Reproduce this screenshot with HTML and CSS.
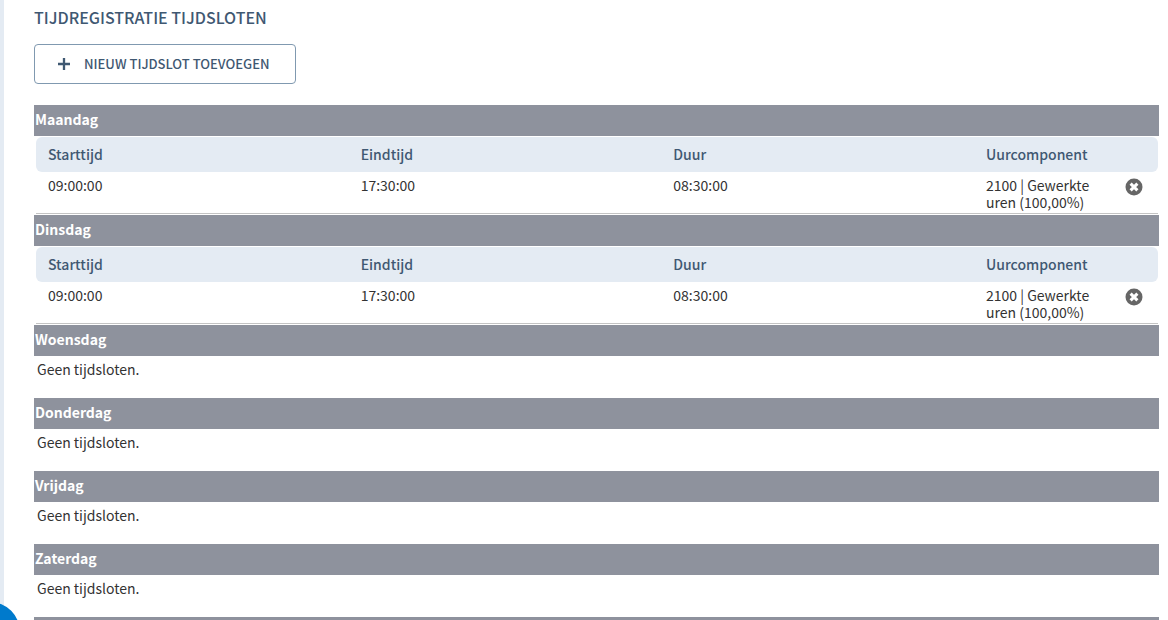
FILE: index.html
```html
<!DOCTYPE html>
<html lang="nl">
<head>
  <meta charset="UTF-8" />
  <meta name="viewport" content="width=device-width, initial-scale=1" />
  <title>Tijdregistratie tijdsloten</title>
  <link rel="stylesheet" href="styles.css">
</head>
<body>

  <main>
    <h1>TIJDREGISTRATIE TIJDSLOTEN</h1>

    <button type="button" class="add-btn">
      <svg width="14" height="14" viewBox="0 0 14 14" aria-hidden="true"><path d="M7 1v12M1 7h12" stroke="currentColor" stroke-width="2.3" fill="none" /></svg>
      <span>NIEUW TIJDSLOT TOEVOEGEN</span>
    </button>

    <section class="day">
      <h2>Maandag</h2>
      <table class="slots">
        <thead>
          <tr><th>Starttijd</th><th>Eindtijd</th><th>Duur</th><th class="component">Uurcomponent</th><th class="action"></th></tr>
        </thead>
        <tbody>
          <tr>
            <td>09:00:00</td>
            <td>17:30:00</td>
            <td>08:30:00</td>
            <td>2100 | Gewerkte uren (100,00%)</td>
            <td class="action">
              <button type="button" class="delete-btn" aria-label="Verwijderen">
                <svg width="18" height="18" viewBox="0 0 18 18" aria-hidden="true"><circle cx="9" cy="9" r="8.5" fill="#666" /><path d="M5.6 5.6l6.8 6.8M12.4 5.6l-6.8 6.8" stroke="#fff" stroke-width="3" /></svg>
              </button>
            </td>
          </tr>
        </tbody>
      </table>
    </section>

    <section class="day">
      <h2>Dinsdag</h2>
      <table class="slots">
        <thead>
          <tr><th>Starttijd</th><th>Eindtijd</th><th>Duur</th><th class="component">Uurcomponent</th><th class="action"></th></tr>
        </thead>
        <tbody>
          <tr>
            <td>09:00:00</td>
            <td>17:30:00</td>
            <td>08:30:00</td>
            <td>2100 | Gewerkte uren (100,00%)</td>
            <td class="action">
              <button type="button" class="delete-btn" aria-label="Verwijderen">
                <svg width="18" height="18" viewBox="0 0 18 18" aria-hidden="true"><circle cx="9" cy="9" r="8.5" fill="#666" /><path d="M5.6 5.6l6.8 6.8M12.4 5.6l-6.8 6.8" stroke="#fff" stroke-width="3" /></svg>
              </button>
            </td>
          </tr>
        </tbody>
      </table>
    </section>

    <section class="day">
      <h2>Woensdag</h2>
      <p class="empty">Geen tijdsloten.</p>
    </section>

    <section class="day">
      <h2>Donderdag</h2>
      <p class="empty">Geen tijdsloten.</p>
    </section>

    <section class="day">
      <h2>Vrijdag</h2>
      <p class="empty">Geen tijdsloten.</p>
    </section>

    <section class="day">
      <h2>Zaterdag</h2>
      <p class="empty">Geen tijdsloten.</p>
    </section>

    <section class="day">
      <h2></h2>
    </section>
  </main>

  <button type="button" class="help-btn" aria-label="Help"></button>

</body>
</html>
```

FILE: styles.css
```css
* { box-sizing: border-box; }
body {
  margin: 0; min-height: 100vh; background: #fff; color: #333;
  border-left: 4px solid #e4ebf3;
  font-family: "Noto Sans CJK SC", "Noto Sans", sans-serif;
  font-size: 14px; line-height: 17px;
}
/* the list of days runs on below the window */
main { height: 100vh; overflow: hidden; padding: 7px 9px 0 30px; }
h1 {
  margin: 0 0 17px; color: #3f5872;
  font-size: 16px; line-height: 20px; font-weight: 500;
}
button { font-family: inherit; cursor: pointer; }

.add-btn {
  display: flex; align-items: center; gap: 13px;
  height: 40px; padding: 0 26px 1px 22px; margin-bottom: 21px;
  background: #fff; color: #3f5872;
  border: 1px solid #8099b0; border-radius: 4px;
  font-size: 13px; font-weight: 500;
}

.day h2 {
  min-height: 31px; margin: 0; padding: 6px 1px 8px;
  background: #8e929d; color: #fff;
  font-size: 14px; line-height: 17px; font-weight: 700;
}

.slots {
  width: calc(100% - 3px); margin: 0 1px 1px 2px; padding-top: 1px;
  table-layout: fixed; border-collapse: separate; border-spacing: 0;
}
.slots th {
  height: 35px; padding: 0 12px; text-align: left;
  background: #e4ebf3; color: #3f5872; font-weight: 500;
}
.slots th:first-child { border-radius: 6px 0 0 6px; }
.slots th:last-child { border-radius: 0 6px 6px 0; }
.slots td {
  padding: 5px 12px 2px; vertical-align: top;
  border-bottom: 1px solid #c4c4c4;
}
.slots .component { width: 142px; }
.slots .action { width: 42px; padding: 6px 0 0 9px; }

.delete-btn {
  display: block; padding: 0;
  background: none; border: 0;
}
.delete-btn svg { display: block; }

.empty { margin: 0; padding: 5px 3px 20px; }

/* round button that hangs over the bottom left corner */
.help-btn {
  position: fixed; left: -40px; bottom: -42px;
  width: 60px; height: 60px; padding: 0;
  background: #007acc; border: 0; border-radius: 50%;
}
```
